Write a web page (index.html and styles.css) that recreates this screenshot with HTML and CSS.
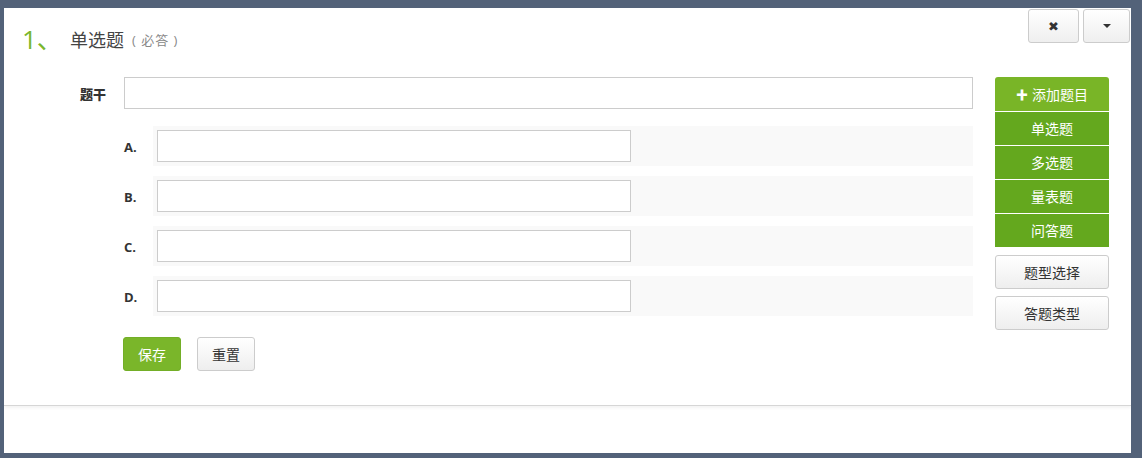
FILE: index.html
```html
<!DOCTYPE html>
<html lang="zh">

<head>
  <meta charset="utf-8">
  <title>单选题</title>
  <link rel="stylesheet" href="styles.css">
</head>

<body>
  <div class="panel">
    <div class="card">
      <div class="card-head">
        <div class="titulo">
          <span class="num">1、</span>
          <span class="nombre">单选题</span>
          <span class="nota">(&nbsp;必答&nbsp;)</span>
        </div>
        <div class="tools">
          <button type="button" class="tool tool-close">&#x2716;</button>
          <button type="button" class="tool tool-drop"><span class="caret"></span></button>
        </div>
      </div>

      <div class="card-body">
        <div class="main">
          <div class="fila-tronco">
            <label class="etiqueta">题干</label>
            <input type="text" class="campo campo-ancho">
          </div>

          <div class="opciones">
            <div class="opcion">
              <span class="letra">A.</span>
              <div class="franja"><input type="text" class="campo"></div>
            </div>
            <div class="opcion">
              <span class="letra">B.</span>
              <div class="franja"><input type="text" class="campo"></div>
            </div>
            <div class="opcion">
              <span class="letra">C.</span>
              <div class="franja"><input type="text" class="campo"></div>
            </div>
            <div class="opcion">
              <span class="letra">D.</span>
              <div class="franja"><input type="text" class="campo"></div>
            </div>
          </div>

          <div class="acciones">
            <button type="button" class="btn btn-verde">保存</button>
            <button type="button" class="btn btn-gris">重置</button>
          </div>
        </div>

        <div class="side">
          <div class="menu-verde">
            <div class="menu-top"><span class="plus">&#x271A;</span>添加题目</div>
            <div class="menu-item">单选题</div>
            <div class="menu-item">多选题</div>
            <div class="menu-item">量表题</div>
            <div class="menu-item">问答题</div>
          </div>
          <button type="button" class="btn btn-gris btn-side">题型选择</button>
          <button type="button" class="btn btn-gris btn-side">答题类型</button>
        </div>
      </div>
    </div>
  </div>
</body>

</html>
```

FILE: styles.css
```css
body {
  margin: 8px 11px 0 4px;
  background-color: #536279;
  font-family: "Open Sans", "Noto Sans CJK SC", sans-serif;
  color: #333;
}

.panel {
  background-color: #fff;
  height: 445px;
}

.card {
  border-bottom: 1px solid #d6d6d6;
  box-shadow: 0 2px 3px rgba(0, 0, 0, 0.05);
  padding-bottom: 34px;
}

.card-head {
  display: flex;
  justify-content: space-between;
  align-items: flex-start;
  height: 69px;
}

.titulo {
  display: flex;
  align-items: center;
  padding-top: 18px;
  padding-left: 18px;
  height: 26px;
}

.num {
  font-size: 26px;
  line-height: 26px;
  color: #7ab62e;
  width: 48px;
}

.nombre {
  font-family: "Noto Sans CJK SC", sans-serif;
  font-size: 18px;
  color: #444;
}

.nota {
  font-family: "Open Sans", "Noto Sans CJK SC", sans-serif;
  font-size: 13px;
  color: #888;
  margin-left: 8px;
  letter-spacing: 1px;
}

.tools {
  display: flex;
  gap: 4px;
  margin-top: 1px;
  margin-right: 1px;
}

.tool {
  height: 34px;
  border: 1px solid #ccc;
  border-radius: 3px;
  background: linear-gradient(#ffffff, #efefef);
  color: #333;
  padding: 0;
  display: flex;
  align-items: center;
  justify-content: center;
}

.tool-close {
  width: 51px;
  font-size: 13px;
}

.tool-drop {
  width: 47px;
}

.caret {
  width: 0;
  height: 0;
  border-left: 4px solid transparent;
  border-right: 4px solid transparent;
  border-top: 4px solid #333;
}

.card-body {
  display: flex;
}

.main {
  flex: 1;
}

.fila-tronco {
  display: flex;
  align-items: center;
}

.etiqueta {
  width: 120px;
  box-sizing: border-box;
  padding-right: 18px;
  text-align: right;
  font-family: "Noto Sans CJK SC", sans-serif;
  font-weight: 900;
  font-size: 13px;
}

.campo {
  height: 32px;
  box-sizing: border-box;
  border: 1px solid #ccc;
  background: #fff;
  width: 474px;
  margin: 0;
}

.campo-ancho {
  flex: 1;
  width: auto;
}

.opciones {
  margin-top: 17px;
  margin-left: 120px;
  display: flex;
  flex-direction: column;
  gap: 10px;
}

.opcion {
  display: flex;
  align-items: center;
}

.letra {
  width: 29px;
  font-weight: bold;
  font-size: 13px;
  padding-top: 2px;
}

.franja {
  flex: 1;
  background-color: #f9f9f9;
  padding: 4px;
  height: 32px;
}

.franja .campo {
  display: block;
}

.acciones {
  display: flex;
  gap: 16px;
  margin-top: 21px;
  margin-left: 119px;
}

.btn {
  height: 34px;
  width: 58px;
  border-radius: 3px;
  font-family: "Noto Sans CJK SC", sans-serif;
  font-size: 14px;
  padding: 0;
  cursor: pointer;
}

.btn-verde {
  border: 1px solid #73ae27;
  background-color: #7ab62a;
  color: #fff;
}

.btn-gris {
  border: 1px solid #ccc;
  background: linear-gradient(#ffffff, #eeeeee);
  color: #333;
}

.side {
  width: 114px;
  margin-left: 22px;
  margin-right: 22px;
  display: flex;
  flex-direction: column;
}

.menu-verde {
  font-family: "Noto Sans CJK SC", sans-serif;
  font-size: 14px;
  color: #fff;
  text-align: center;
}

.menu-top {
  height: 34px;
  line-height: 34px;
  background-color: #79b527;
  border-radius: 3px 3px 0 0;
}

.plus {
  font-size: 12px;
  margin-right: 4px;
}

.menu-item {
  height: 33px;
  line-height: 33px;
  background-color: #64a81e;
  border-top: 1px solid #fff;
}

.menu-item:first-of-type {
  border-top: none;
  height: 34px;
}

.btn-side {
  width: 114px;
  margin-top: 7px;
}

.menu-verde + .btn-side {
  margin-top: 8px;
}
```
